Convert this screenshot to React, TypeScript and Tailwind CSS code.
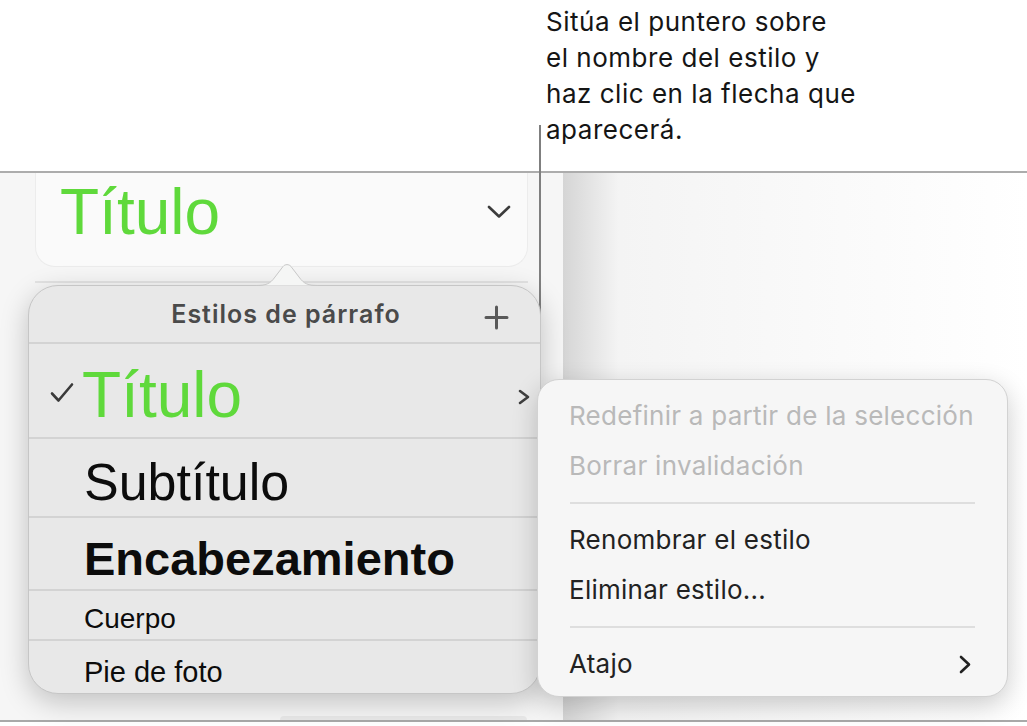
import React from 'react';

const GREEN = 'text-[#5fd93b]';

function ChevronDown() {
  return (
    <svg width="24" height="14" viewBox="0 0 24 14" fill="none" stroke="#3c3c3c" strokeWidth="2.6" strokeLinecap="round" strokeLinejoin="round">
      <path d="M2 2 L12 11.5 L22 2" />
    </svg>
  );
}

function ChevronRight({ w = 12, h = 16, color = '#3f3f3f' }: { w?: number; h?: number; color?: string }) {
  return (
    <svg width={w} height={h} viewBox={`0 0 ${w} ${h}`} fill="none" stroke={color} strokeWidth="2.6" strokeLinecap="round" strokeLinejoin="round">
      <path d={`M2 2 L${w - 2} ${h / 2} L2 ${h - 2}`} />
    </svg>
  );
}

function Check() {
  return (
    <svg width="24" height="21" viewBox="0 0 24 21" fill="none" stroke="#3a3a3a" strokeWidth="2.6" strokeLinecap="round" strokeLinejoin="round">
      <path d="M2 11.5 L8.5 18.5 L22 2.5" />
    </svg>
  );
}

function Plus() {
  return (
    <svg width="25" height="25" viewBox="0 0 25 25" fill="none" stroke="#595959" strokeWidth="3" strokeLinecap="round">
      <path d="M12.5 2 V23 M2 12.5 H23" />
    </svg>
  );
}

// pointer nub on top of the styles popover
function Nub() {
  return (
    <svg width="62" height="23" viewBox="0 0 62 23" className="block">
      <path d="M0 22.5 C10 22.5 14 21 19 14 L27 3.5 C29 1 33 1 35 3.5 L43 14 C48 21 52 22.5 62 22.5 Z" fill="#f5f6f5" />
      <path d="M0 22.5 C10 22.5 14 21 19 14 L27 3.5 C29 1 33 1 35 3.5 L43 14 C48 21 52 22.5 62 22.5" fill="none" stroke="#c8c8c8" strokeWidth="1" />
    </svg>
  );
}

const styleRows = [
  { name: 'Subtítulo', cls: 'h-[79px] pt-[17px] text-[52px]' },
  { name: 'Encabezamiento', cls: 'h-[73px] pt-[17px] text-[47px] font-bold' },
  { name: 'Cuerpo', cls: 'h-[50px] pt-[14px] text-[28px]' },
  { name: 'Pie de foto', cls: 'h-[52px] pt-[17px] text-[29px]' },
];

function MenuItem({ label, muted, submenu }: { label: string; muted?: boolean; submenu?: boolean }) {
  return (
    <div className={`flex h-[50px] items-center justify-between pl-[31px] pr-[36px] text-[26px] leading-none tracking-[0.01em] ${muted ? 'text-[#b9b9b9]' : 'text-[#222222]'}`}>
      <span className="whitespace-nowrap">{label}</span>
      {submenu && <ChevronRight w={12} h={19} color="#222222" />}
    </div>
  );
}

function MenuSeparator() {
  return (
    <div className="flex h-[24px] items-center px-[32px]">
      <div className="h-[2px] w-full bg-[#dedede]" />
    </div>
  );
}

export default function App() {
  return (
    <div className="relative flex h-[726px] w-[1027px] flex-col overflow-hidden bg-white font-['Inter',sans-serif]">
      {/* hint text */}
      <div className="h-[171px] pl-[546px] pt-[4px] text-[26px] leading-[36px] tracking-[0.02em] text-[#151515]">
        <div>Sitúa el puntero sobre</div>
        <div>el nombre del estilo y</div>
        <div>haz clic en la flecha que</div>
        <div>aparecerá.</div>
      </div>
      <div className="h-[2px] bg-[#acacac]" />

      <div className="flex h-[547px]">
        {/* format sidebar */}
        <aside className="flex w-[563px] flex-col bg-[#f6f6f6] px-[35px]">
          <div className="h-[94px] rounded-b-[20px] border border-t-0 border-[#ececec] bg-[#fafafa] pl-[24px] pr-[16px] pt-[7px]">
            <div className="flex items-start justify-between">
              <span className={`font-['Liberation_Sans',sans-serif] text-[64px] leading-none ${GREEN}`}>Título</span>
              <span className="pt-[25px]"><ChevronDown /></span>
            </div>
          </div>
          <div className="mt-[14px] h-[2px] bg-[#e3e3e3]" />
          <div className="mt-auto ml-[245px] h-[4px] w-[247px] rounded-t-[6px] bg-[#e9e9e9]" />
        </aside>
        <div className="flex-1 bg-gradient-to-r from-[#d5d5d5] via-[#f4f4f4] via-[12%] to-white" />
      </div>

      <div className="h-[2px] bg-[#a9a9a9]" />
      <div className="flex-1 bg-white" />

      {/* leader line for the hint */}
      <div className="absolute left-[539px] top-[125px] h-[258px] w-[2px] bg-[#7f7f7f]" />

      {/* paragraph styles popover */}
      <div className="absolute left-[28px] top-[285px] w-[513px]">
        <div className="absolute -top-[22px] left-[228px]">
          <Nub />
        </div>
        <div className="h-[409px] overflow-hidden rounded-[30px] border border-[#c6c6c6] bg-[#e8e8e8] shadow-[0_8px_28px_rgba(0,0,0,0.22)]">
          <div className="relative flex h-[58px] justify-center border-b-2 border-[#d3d3d3] pt-[16px] text-[25px] font-semibold leading-none tracking-[0.04em] text-[#4a4a4a]">
            <span className="pl-[3px]">Estilos de párrafo</span>
            <span className="absolute right-[31px] top-[19px]"><Plus /></span>
          </div>
          <div className="flex h-[95px] items-start border-b-2 border-[#d3d3d3] pl-[21px] pr-[10px]">
            <span className="pt-[38px]"><Check /></span>
            <span className={`ml-[8px] pt-[19px] font-['Liberation_Sans',sans-serif] text-[64px] leading-none ${GREEN}`}>Título</span>
            <span className="ml-auto pt-[45px]"><ChevronRight w={12} h={16} /></span>
          </div>
          {styleRows.map((r, i) => (
            <div
              key={r.name}
              className={`pl-[55px] font-['Liberation_Sans',sans-serif] leading-none text-[#0c0c0c] ${r.cls} ${i < styleRows.length - 1 ? 'border-b-2 border-[#d3d3d3]' : ''}`}
            >
              {r.name}
            </div>
          ))}
        </div>
      </div>

      {/* context menu for the selected style */}
      <div className="absolute left-[537px] top-[379px] h-[318px] w-[471px] rounded-[22px] border border-[#d2d2d2] bg-[#f6f6f6] py-[11px] shadow-[0_8px_26px_rgba(0,0,0,0.2)]">
        <MenuItem label="Redefinir a partir de la selección" muted />
        <MenuItem label="Borrar invalidación" muted />
        <MenuSeparator />
        <MenuItem label="Renombrar el estilo" />
        <MenuItem label="Eliminar estilo..." />
        <MenuSeparator />
        <MenuItem label="Atajo" submenu />
      </div>
    </div>
  );
}
